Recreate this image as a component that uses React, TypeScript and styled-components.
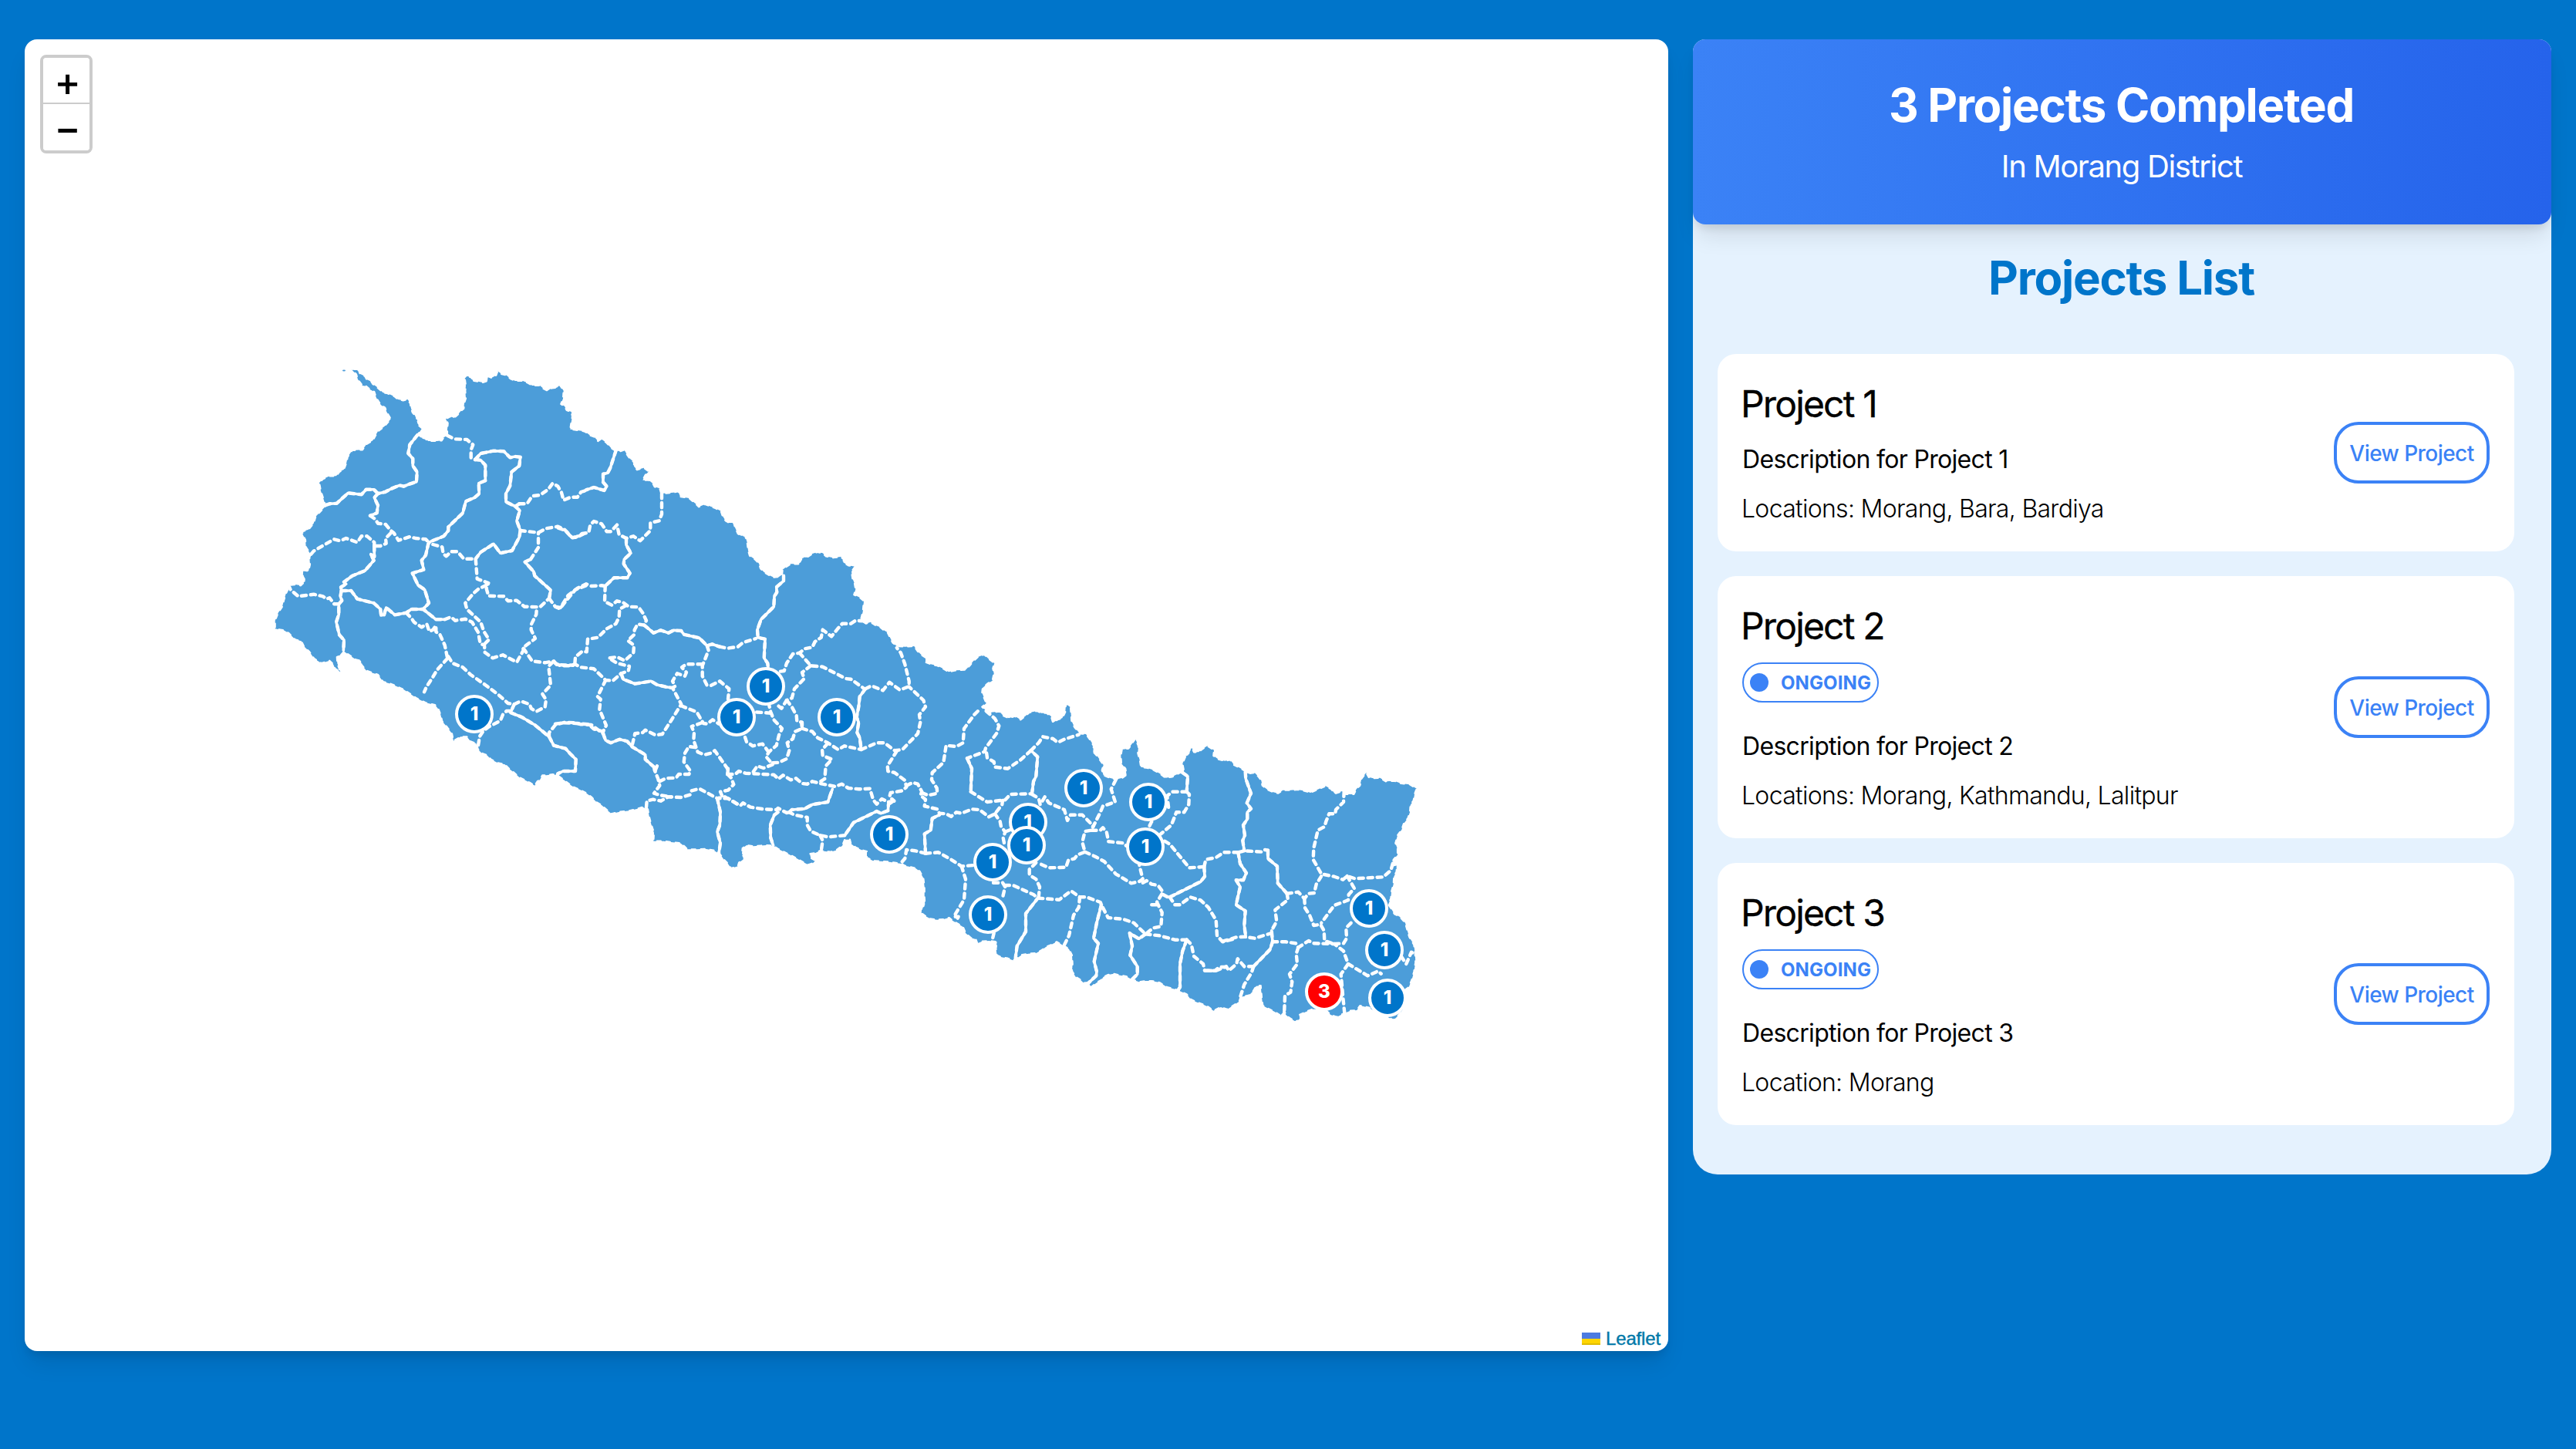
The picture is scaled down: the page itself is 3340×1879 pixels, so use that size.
import React from "react";
import styled, { createGlobalStyle, css } from "styled-components";

const GlobalStyle = createGlobalStyle`
  *, *::before, *::after { box-sizing: border-box; }
  body { margin: 0; background: #0075ca; font-family: Inter, "Liberation Sans", sans-serif; color: #000; }
  h1, h2, h3, p { margin: 0; font-weight: inherit; }
  button { font-family: inherit; cursor: pointer; }
`;

/* ---------- district geometry ---------- */

type Sheet = { x: number; y: number };
const NW: Sheet = { x: 340, y: 460 };
const N: Sheet = { x: 720, y: 560 };
const SW: Sheet = { x: 560, y: 820 };
const MID: Sheet = { x: 940, y: 820 };
const CE: Sheet = { x: 1180, y: 880 };
const E: Sheet = { x: 1480, y: 940 };

/* Survey sheets are drawn at three units per map pixel. */
const plot = (s: Sheet, pts: string) =>
  pts
    .trim()
    .split(/\s+/)
    .map((p) => {
      const [x, y] = p.split(",").map(Number);
      return `${(s.x + x / 3).toFixed(1)},${(s.y + y / 3).toFixed(1)}`;
    })
    .join(" ");

const outline = [
  plot(NW, "342,47 346,52 358,60 375,60 380,74 400,84 406,96 424,104 430,114 444,124 455,134 470,148 486,150 500,156 514,162 528,174 548,178 566,174 576,190 578,206 584,224 594,236 598,246 608,254 602,264 610,276 622,286 604,312 616,322 634,326 646,336 664,336 680,336 698,334 706,322 720,314 720,290 722,266 714,250 732,240 746,246 760,234 772,220 784,210 786,188 792,170 790,140 792,120 788,92 802,78 812,94 824,102 840,104 858,108 876,102 878,84 892,90 910,80 916,64 932,76 950,80 966,94 984,102 1014,102 1034,110 1050,120 1080,120 1094,132 1110,140 1126,130 1146,128 1158,118 1172,140 1170,170 1162,192 1176,200 1184,216 1202,222 1206,240 1202,262 1198,290 1226,294 1252,298"),
  plot(N, "120,2 136,14 152,20 166,36 178,28 196,40 206,50 216,62 232,72 252,76 268,70 280,90 290,104 306,118 306,134 318,148 344,140 364,154 350,168 340,188 364,188 380,202 386,214 406,220 412,240 440,238 460,236 478,232 486,252 520,258 534,270 546,280 558,292 582,282 604,290 624,298 644,308 650,326 662,346 676,354 694,354 700,374 710,396 722,404 738,404 746,430 750,462 756,482 776,496 792,512 798,532 812,546 832,558 850,566 870,564 882,556 884,536 898,526 916,514 946,514 956,506 958,488 980,488 1000,474 1020,468 1040,472 1052,484 1080,490 1110,486 1122,496 1120,508 1140,520 1166,524 1152,544 1156,570 1164,590 1168,612 1162,634 1184,644 1200,658 1196,700 1188,732 1202,742"),
  plot(MID, "548,-34 566,-40 584,-28 604,-20 618,-8 632,0 642,20 652,40 668,54 700,56 736,54 748,72 764,88 780,98 780,116 800,124 826,130 850,142 870,154 900,148 936,146 952,130 966,112 984,96 1008,86 1024,102 1048,120 1042,140 1046,160 1040,188 1020,200 1002,216 1000,234 1008,256 1016,276 1000,290 1024,312"),
  plot(CE, "348,128 362,144 384,154 408,146 430,160 448,146 464,132 494,126 510,134 530,134 548,146 556,172 574,160 592,154 604,130 606,98 624,112 626,140 628,164 640,190 660,214 684,216 700,238 714,262 712,284 730,304 752,336 746,356 752,376 776,386 800,392 826,386 842,374 838,350 822,330 820,300 824,276 850,272 864,252 876,234 888,262 886,290 894,320 898,344 924,348 948,356 972,370 994,386 1020,382 1050,366"),
  plot(E, "166,184 160,150 172,122 182,118 186,100 196,90 204,106 222,106 240,92 256,82 282,98 280,120 300,134 324,140 346,136 360,156 380,166 404,180 414,190 440,186 454,200 466,216 470,236 490,252 512,262 532,266 550,254 580,254 606,252 630,256 658,264 684,252 716,238 738,250 752,268 780,258 796,270 826,270 836,250 850,236 856,210 874,186 884,204 904,208 928,206 950,220 984,218 1010,228 1044,232 1070,248 1062,270 1058,294 1046,312 1044,340 1036,364 1020,384 1012,408 996,430 988,460 996,484 996,506 980,524 976,548 992,544 992,570 982,590 980,620 972,650 970,676 960,698 972,716 984,736 1004,746 1026,770 1034,800 1042,826 1060,856 1064,890 1066,924 1060,960 1052,990 1040,1020 1026,1030 1020,1070 1020,1100 1010,1116 996,1134 980,1148 960,1138 940,1120 900,1110 886,1100 866,1096 850,1092 838,1110 812,1112 784,1124 760,1136 736,1128 720,1112 690,1105 664,1106 640,1116 614,1128 616,1150 596,1152 576,1140 562,1128 556,1112 540,1130 518,1116 494,1104 472,1092 468,1060 466,1036 464,1014 446,1016 434,1036 418,1052 386,1058 380,1076 360,1090 334,1106 308,1098 280,1112 262,1098 236,1086 212,1078 190,1066 176,1048 150,1036 130,1028 100,1020 70,1002 40,996"),
  plot(CE, "916,1176 890,1180 862,1170 840,1158 816,1154 792,1148 770,1152 752,1160 744,1172 724,1184 704,1200 694,1182 676,1184 660,1170 644,1160 630,1138 632,1110 630,1076 618,1052 600,1040 570,1024 548,1036 528,1044 512,1056 490,1068 460,1070 436,1074 418,1086 400,1096 380,1088 356,1084 338,1076 334,1050 338,1024 306,1020 280,1022 262,1030 256,1014 236,1008 216,990 206,966 180,950 166,942 152,930 130,936 104,938 78,934 60,924 44,912 46,890 58,880 56,850 56,810 52,776 38,750 22,738 0,732"),
  plot(MID, "700,908 686,900 660,896 630,892 600,890 574,888 552,876 552,852 530,846 508,836 490,822 486,806 466,806 456,830 432,848 410,854 390,852 372,848 352,858 330,862 334,878 352,888 342,898 324,904 304,894 280,880 254,866 230,854 206,842 188,830 160,828 110,832 84,828 68,840 66,860 76,880 54,896 50,910 24,918"),
  plot(SW, "1150,898 1136,884 1120,862 1096,848 1064,842 1030,844 994,844 982,832 966,820 930,816 900,812 862,812 864,780 854,750 846,720 840,688 820,680 800,686 768,694 730,698 698,706 680,690 660,672 640,660 620,640 598,624 576,612 552,602 536,592 516,576 494,560 470,552 446,556 430,556 420,574 410,580 400,596 380,584 360,574 340,564 320,546 300,530 284,514 256,508 230,494 214,478 194,470 180,456 172,432 150,424 136,406 112,406 84,422 78,394 60,370 40,346 34,320 26,300 12,282 -24,274 -60,256 -110,222 -160,200 -190,192"),
  plot(NW, "450,1244 430,1238 404,1228 386,1206 384,1190 364,1186 344,1172 318,1154 306,1168 290,1172 292,1200 304,1234 284,1222 276,1204 262,1190 230,1200 202,1182 184,1156 162,1134 152,1114 128,1108 104,1084 84,1072 50,1066 50,1034 62,1004 78,980 84,956 92,930 104,904 110,896 130,894 150,898 168,880 158,862 160,838 180,842 186,816 184,790 188,776 170,748 168,720 158,700 156,688 180,680 200,656 208,630 230,606 246,590 240,566 228,530 222,498 236,484 262,472 288,472 300,456 318,446 328,420 332,398 350,372 390,370 406,348 430,334 450,298 476,278 500,250 484,222 478,206 462,196 444,168 436,144 420,136 404,122 390,120 372,96 366,76 352,62"),
].join(" ");

const sharedBorders: [Sheet, string][] = [
  [NW, "604,312 574,350 568,384 586,404 586,432 602,456 600,494 576,502 550,512 534,508 500,522 478,534 450,540"],
  [NW, "450,540 434,524 404,524 386,544 334,538 290,578 262,580 244,586"],
  [NW, "450,540 436,556 450,586 446,616 420,626"],
  [NW, "828,408 850,410 868,430 868,490 842,500 844,540 826,556 792,570 780,616 724,670 724,684 706,706 652,728 646,736 636,780 620,800 628,836 584,850 606,896 632,914 648,966 626,990"],
  [NW, "828,408 850,384 900,374 940,376 964,400 984,396 1004,398 1000,432 970,456 964,510 948,540 948,572 984,590 1000,580"],
  [NW, "436,744 436,786 422,776 434,800 400,840 350,860 318,884 326,892 306,904 308,918"],
  [NW, "984,590 1002,606 990,646 1004,684 1000,710 972,762 926,772 900,736 850,768 830,794"],
  [NW, "1116,948 1122,916 1060,860 1056,844 1022,806 1044,796"],
  [NW, "308,918 346,918 370,950 434,966 460,990 462,1014 474,1012 482,984 516,1012 560,1004 580,990 626,990 676,1030 710,1030"],
  [NW, "308,918 304,940 310,956 298,970 298,1010 288,1040 300,1090 318,1110 316,1150"],
  [N, "236,72 214,140 204,160 186,164 186,196 200,212 190,228 150,216 120,226"],
  [N, "276,414 276,440 294,472 268,496 266,514 290,550 280,568 228,568 194,600"],
  [N, "346,752 382,782 410,772 440,782 460,772 490,774 500,788 560,802 590,832 610,826 640,836"],
  [N, "888,560 888,580 860,604 862,624 852,640 850,680 820,710 800,730 786,770 788,800 816,806 812,880 826,900 828,920"],
  [N, "256,940 264,962 310,980 372,970 396,984 430,992 456,996"],
  [SW, "320,280 306,312 350,330 400,360 456,406"],
  [SW, "456,406 474,440 520,452 536,470 560,494 558,540 510,540 490,550 486,560"],
  [SW, "666,394 676,420 696,430 730,416 760,424 780,446 830,476 830,494 864,524"],
  [SW, "1110,646 1122,700 1120,750 1110,776 1122,820 1116,860"],
  [MID, "250,700 260,690 310,686 340,670 400,660 418,610"],
  [MID, "636,660 658,656 636,668 634,694 606,704 590,696 500,740 466,790"],
  [MID, "206,700 192,710 176,750 178,800 188,830"],
  [MID, "546,220 524,250 520,290 512,330 520,350 514,390 524,410 530,456"],
  [MID, "942,490 960,530 956,620"],
  [MID, "1194,628 1200,580 1210,560 1216,484 1190,460"],
  [MID, "780,860 776,784 800,770 806,724 834,710"],
  [CE, "1060,366 1080,380 1076,440"],
  [CE, "1144,732 1146,770 1130,790 1010,850"],
  [CE, "500,850 450,914 450,984 416,1040 410,1086"],
  [CE, "916,994 890,1012 870,1000 854,990 864,1040 856,1076 884,1120 884,1150 864,1170"],
  [CE, "744,880 726,950 714,1010 732,1030 716,1100 726,1140 724,1156 694,1184"],
  [CE, "1076,1016 1060,1060 1050,1110 1050,1200 1040,1216"],
  [E, "404,184 406,210 426,266 410,304 426,326 412,340 412,366 396,390 402,430 394,450 400,490"],
  [E, "492,488 492,520 528,550 530,616 566,656"],
  [E, "376,496 384,540 408,576 396,604 368,604 384,630 368,700 404,724 400,780 406,826"],
  [E, "436,940 500,874 510,844 506,800"],
];

const dashedBorders: [Sheet, string][] = [
  [NW, "420,626 440,640 450,656 480,660 500,684 512,694 530,722 574,708 596,714 636,718 650,732"],
  [NW, "500,694 480,714 482,734 460,744 436,744"],
  [NW, "190,776 200,764 240,740 280,718 304,724 326,714 370,730 386,706 408,706 436,730 436,744"],
  [NW, "720,314 748,328 796,330 820,350 812,370 812,408"],
  [NW, "664,738 700,748 704,774 716,784 734,766 760,766 784,794 830,794 836,872 880,888 872,910 880,938 940,940 956,958 990,956 1020,980 1080,982 1116,948"],
  [NW, "1044,796 1074,750 1074,692"],
  [NW, "1004,684 1074,692 1104,676 1150,668 1176,680 1206,712 1232,706 1260,692"],
  [NW, "1000,580 1030,580 1050,550 1080,546 1112,524 1130,500 1150,512 1164,536 1172,566 1200,554 1226,554 1240,534 1260,528"],
  [NW, "1116,948 1140,980 1158,988 1180,960 1218,914 1260,898"],
  [NW, "872,896 840,912 820,930 790,966 796,990 850,1040 862,1076 882,1108 860,1130"],
  [NW, "102,896 110,914 140,940 200,932 236,940 250,950 262,946 280,970 298,970"],
  [NW, "710,1030 734,1020 750,1034 790,1028 816,1040 840,1080 848,1124 864,1130 866,1158 896,1180 936,1168 990,1196 1016,1150 1014,1140 1062,1104 1046,1070 1046,1050 1066,1010 1068,982"],
  [NW, "560,1004 580,1024 590,1040 620,1060 640,1048 650,1076 664,1070 676,1054 676,1078 690,1086 710,1130 720,1178"],
  [NW, "720,1182 680,1226 660,1260 640,1290 630,1312"],
  [N, "414,240 414,320 404,346 370,354 370,384 330,424 304,406 276,414 248,400 240,362 216,388 200,388 180,358 150,348 136,362 130,392 104,396 80,410 64,412 40,384 0,370"],
  [N, "194,600 180,598 140,600 120,592 86,608 50,636 20,684 0,680"],
  [N, "194,600 192,660 220,674 240,658 264,664 286,680 324,682 340,704 354,734 346,752"],
  [N, "640,836 670,842 710,836 730,820 780,804"],
  [N, "274,676 250,690 248,720 236,746 200,766 166,800 126,806 122,856 104,854 78,876 76,904"],
  [N, "346,752 320,748 308,770 306,790 282,812 306,830 304,860 270,890 240,876 208,880 240,900 288,912 284,930 256,940"],
  [N, "0,900 20,910 60,910 76,904 100,916 150,922 196,966 224,968 256,940"],
  [N, "590,832 596,850 572,910 572,950 590,986 606,986 640,970 676,1000 672,1040"],
  [N, "572,904 510,904 492,916 510,936 504,950 474,940 456,970 466,990 456,996 490,1060 446,1130 416,1176 390,1180 350,1160 340,1170 310,1174 300,1216"],
  [N, "196,966 164,1030 176,1040 172,1080 198,1142 186,1166"],
  [N, "0,1136 30,1132 80,1134 130,1138 150,1156 186,1166"],
  [N, "1200,736 1168,734 1150,746 1116,746 1100,764 1074,796 1040,770 1034,800 1010,816 1000,838 970,844 950,860 924,864 900,900 890,930 860,934"],
  [N, "950,860 994,910 1040,914 1130,960 1150,962 1200,998"],
  [N, "994,910 960,936 968,960 930,1000 920,1036 900,1044 880,1076 860,1060"],
  [N, "900,1044 920,1070 938,1104 940,1126 960,1130 960,1150"],
  [N, "490,1066 550,1090 576,1134 590,1136 612,1120 636,1136"],
  [SW, "356,62 390,112 440,118 474,112 486,126 550,128"],
  [SW, "64,94 80,120 120,136 150,164 210,206 260,244 296,276 320,280 346,268 380,280 386,296 406,308 440,290 444,262 430,240 462,206 454,132 474,112"],
  [SW, "456,406 456,390 480,360 516,350 560,352 580,358 620,360 666,394"],
  [SW, "306,306 290,306 276,320 266,344 220,368 200,384 186,404 180,440"],
  [SW, "864,524 866,536 880,570 886,596 864,626 890,634 930,640"],
  [SW, "886,580 910,568 950,566 960,552 1000,552 1006,540 980,504 984,470 1000,444 1026,448"],
  [SW, "876,520 868,540"],
  [SW, "1050,352 1010,366 1020,390 1018,420 1034,466 1060,476 1084,470 1100,460 1150,530 1150,552"],
  [SW, "834,680 836,656 860,650 890,656 920,640 970,642 1004,632 1010,616 1040,608 1110,646"],
  [SW, "1150,552 1164,566 1174,592 1152,614 1122,620 1130,640 1110,646 1152,646 1200,676"],
  [MID, "10,552 40,552 54,540 80,548 190,554 208,570 226,556 256,574 276,568 300,588 320,590 340,580 380,590 430,600 454,590 480,606 520,610 564,608 576,650 590,668 610,648 636,660"],
  [MID, "0,640 60,674 70,664 100,680 150,688 200,690 206,684 240,702 250,700"],
  [MID, "12,530 10,552"],
  [MID, "110,542 126,520 150,528 186,514 160,484 170,466 200,440 210,400 222,374 190,340 178,310 172,284"],
  [MID, "178,314 116,310"],
  [MID, "78,408 84,426 108,442 146,434 170,466"],
  [MID, "186,508 210,506 240,492 250,460 242,430 264,414 272,386 300,374 298,350 280,344"],
  [MID, "546,220 570,208 614,226 640,194 680,224 716,210 716,190 700,124 684,80 668,60"],
  [MID, "300,374 340,386 360,410 400,430 440,456 464,442 530,456"],
  [MID, "400,432 378,456 380,480 416,494 392,520 388,570 366,584"],
  [MID, "530,456 590,430 620,430 660,460 690,456 750,394 760,350 756,320 780,290 772,264 716,212"],
  [MID, "668,462 632,520 634,540 660,546 700,576 706,602 690,616 644,624 640,640 658,656"],
  [MID, "466,790 400,796 370,790 334,774 320,750 320,720 270,710 250,700"],
  [MID, "370,790 380,810 374,850"],
  [MID, "706,596 730,584 750,590 766,620 760,634 780,650 776,676 826,688 834,704 860,706 880,716 900,700 920,704 960,688 990,690 1026,718 1050,706 1078,670 1080,654"],
  [MID, "766,624 790,634 826,626 824,606 804,574 806,546 850,506 860,440 900,444 926,430 930,374 970,320 990,300"],
  [MID, "1016,306 1050,336 1066,364 1056,394 1014,450 1010,464 942,490"],
  [MID, "956,620 1020,660 1090,652 1110,630 1194,628"],
  [MID, "1190,460 1150,496 1100,530 1050,524 1046,504 1020,488 1016,460"],
  [MID, "780,860 830,856 880,884 920,910 970,906"],
  [MID, "780,860 740,850 706,846 700,880 684,898"],
  [MID, "920,910 936,960 930,1040 890,1106 908,1106 898,1124"],
  [MID, "1050,706 1070,736 1074,756 1090,776 1082,800 1088,830"],
  [MID, "1110,768 1090,776"],
  [MID, "1044,974 1080,974 1090,990 1078,1040"],
  [MID, "1088,984 1120,984 1200,1020 1218,1034"],
  [MID, "1046,1170 1040,1195"],
  [CE, "470,280 500,250 516,226 556,234 574,248 600,236 656,218"],
  [CE, "474,450 500,466 506,490 524,460 540,484 600,510 612,552 624,530 670,530 700,560 712,576"],
  [CE, "800,394 782,430 798,480 750,496 740,520 712,576 706,590 680,594 670,636 680,674 650,686 640,700 616,706 606,734 540,736 496,716"],
  [CE, "706,590 740,590 750,580 764,596 772,634 830,640 840,650"],
  [CE, "680,674 720,692 756,712 800,760 860,796 890,790 905,780 892,726"],
  [CE, "905,794 920,786 940,800 964,804 984,830 960,870 980,910 976,964 946,970 916,994 870,950 830,936 770,930 744,880 740,870 686,850 660,850 626,826 580,860 500,854"],
  [CE, "940,880 970,880"],
  [CE, "1076,440 1020,440 1000,456 1006,506"],
  [CE, "1076,440 1086,450 1084,490 1066,520 1036,520 1016,570 976,604"],
  [CE, "940,556 928,580"],
  [CE, "990,632 1010,644 1086,736 1144,732"],
  [CE, "1010,850 1030,880 1050,880 1090,850 1130,862 1160,890 1190,940 1194,1000 1216,1024 1256,1014"],
  [CE, "984,840 1010,854"],
  [CE, "1144,732 1150,704 1190,696 1220,676 1276,676"],
  [CE, "660,850 656,890 636,920 618,1000 600,1036"],
  [CE, "916,994 970,1000 1030,1016 1076,1016"],
  [CE, "1076,1016 1094,1034 1104,1080 1140,1110 1146,1136 1186,1136 1204,1122 1230,1122"],
  [CE, "490,716 464,742 464,764 490,780 504,810 500,850"],
  [E, "376,496 400,490 470,494 480,486 492,488"],
  [E, "566,656 610,650 634,676 650,656 672,654 680,620 700,588"],
  [E, "788,260 786,300 756,330 754,346 730,346 718,376 712,396 686,410 670,480 668,524 700,580 750,590 784,602 800,588 830,598 900,594 940,592 970,566 980,530"],
  [E, "800,588 828,636 806,660 804,682 750,702 700,770"],
  [E, "634,676 636,712 654,740 670,780 696,776 710,800 712,840 750,852"],
  [E, "566,656 570,680 520,720 526,764 506,800"],
  [E, "510,844 560,844 600,850 610,866 650,840 670,850 750,852 786,880 804,930 776,970 784,1060 790,1120"],
  [E, "750,852 786,850 798,830 796,790 826,760"],
  [E, "316,842 370,826 400,824 440,830 506,810"],
  [E, "436,940 400,940 374,910 370,930 340,956 330,940 290,956 246,956"],
  [E, "436,940 428,964 400,1010 384,1060"],
  [E, "610,866 602,890 606,930 576,970 586,1000 580,1040 558,1054 556,1110"],
  [E, "804,930 880,976 920,958 932,968"],
  [E, "1010,900 1030,930 1050,884 1062,892"],
];

const markers: { x: number; y: number; count: number; active?: boolean }[] = [
  { x: 993, y: 890, count: 1 },
  { x: 615, y: 926, count: 1 },
  { x: 955, y: 930, count: 1 },
  { x: 1085, y: 930, count: 1 },
  { x: 1405, y: 1022, count: 1 },
  { x: 1489, y: 1040, count: 1 },
  { x: 1332.5, y: 1066, count: 1 },
  { x: 1153, y: 1082, count: 1 },
  { x: 1331, y: 1096, count: 1 },
  { x: 1485, y: 1098, count: 1 },
  { x: 1287, y: 1118, count: 1 },
  { x: 1775, y: 1178, count: 1 },
  { x: 1281, y: 1186, count: 1 },
  { x: 1795, y: 1232, count: 1 },
  { x: 1717, y: 1286, count: 3, active: true },
  { x: 1799, y: 1294, count: 1 },
];

/* ---------- layout ---------- */

const Page = styled.main`
  display: flex;
  align-items: flex-start;
  gap: 32px;
  width: 3340px;
  height: 1879px;
  padding: 51px 32px 0;
  overflow: hidden;
`;

const MapPanel = styled.section`
  position: relative;
  width: 2131px;
  height: 1701px;
  flex: none;
  border-radius: 16px;
  background: #fff;
  box-shadow: 0 20px 30px -6px rgba(0, 0, 0, 0.1), 0 8px 12px -4px rgba(0, 0, 0, 0.1);
`;

const Districts = styled.svg`
  display: block;
  width: 100%;
  height: 100%;
  border-radius: 16px;
`;

const Outline = styled.polygon`
  fill: #4c9dd9;
  stroke: #fff;
  stroke-width: 2.2;
  stroke-linecap: round;
  stroke-linejoin: round;
  stroke-dasharray: 5 7;
`;

const Border = styled.polyline`
  fill: none;
  stroke: #fff;
  stroke-width: 4.4;
  stroke-linecap: round;
  stroke-linejoin: round;
  stroke-dasharray: 6.2 5.8;
`;

const BorderFill = styled(Border)`
  stroke-width: 3.6;
  stroke-dasharray: none;
`;

const Marker = styled.div<{ $x: number; $y: number; $active?: boolean }>`
  position: absolute;
  left: ${(p) => p.$x - 32 - 25}px;
  top: ${(p) => p.$y - 51 - 25}px;
  display: flex;
  align-items: center;
  justify-content: center;
  width: 50px;
  height: 50px;
  border: 4px solid #fff;
  border-radius: 50%;
  background: ${(p) => (p.$active ? "#ff0000" : "#0075ca")};
  color: #fff;
  font-size: 24px;
  font-weight: 800;
  line-height: 1;
`;

const ZoomControl = styled.div`
  position: absolute;
  left: 20px;
  top: 20px;
  display: flex;
  flex-direction: column;
  width: 68px;
  border: 4px solid #ccc;
  border-radius: 8px;
  overflow: hidden;
`;

const ZoomButton = styled.button<{ $divider?: boolean }>`
  display: flex;
  align-items: center;
  justify-content: center;
  height: 60px;
  padding: 2px 0 0 3px;
  border: 0;
  background: #fff;
  color: #000;
  font-size: 52px;
  font-weight: 500;
  line-height: 1;
  ${(p) => p.$divider && css`
    padding-top: 4px;
    border-bottom: 2px solid #ccc;
  `}
`;

const Attribution = styled.div`
  position: absolute;
  right: 10px;
  bottom: 0;
  display: flex;
  align-items: center;
  gap: 7px;
  height: 32px;
  color: #0078a8;
  font-family: "Liberation Sans", Arial, sans-serif;
  font-size: 24px;
  line-height: 32px;
  letter-spacing: -0.15px;
  -webkit-text-stroke: 0.4px #0078a8;
`;

const Flag = styled.svg`
  width: 24px;
  height: 16px;
`;

const SidePanel = styled.aside`
  display: flex;
  flex-direction: column;
  width: 1113px;
  flex: none;
  border-radius: 16px 16px 32px 32px;
  background: #e5f2fe;
`;

const Banner = styled.header`
  display: flex;
  flex-direction: column;
  align-items: center;
  gap: 16px;
  height: 240px;
  padding: 49px 48px 47px;
  border-radius: 16px;
  background: linear-gradient(to right, #3b82f6, #2563eb);
  color: #fff;
  box-shadow: 0 20px 30px -6px rgba(0, 0, 0, 0.1), 0 8px 12px -4px rgba(0, 0, 0, 0.1);
`;

const BannerTitle = styled.h1`
  margin-right: 2px;
  font-size: 60px;
  font-weight: 700;
  line-height: 72px;
  letter-spacing: -1.3px;
`;

const BannerSubtitle = styled.p`
  margin-right: 1px;
  font-size: 40px;
  line-height: 56px;
  letter-spacing: -1.36px;
`;

const ListTitle = styled.h2`
  margin: 33px 0 63px;
  padding-right: 2px;
  color: #0075ca;
  font-size: 60px;
  font-weight: 700;
  line-height: 72px;
  letter-spacing: -1.25px;
  text-align: center;
`;

const List = styled.div`
  display: flex;
  flex-direction: column;
  gap: 32px;
  padding: 0 48px 64px 32px;
`;

const Card = styled.article`
  display: flex;
  align-items: center;
  justify-content: space-between;
  padding: 33px 32px 31px;
  border-radius: 24px;
  background: #fff;
`;

const Details = styled.div`
  display: flex;
  flex-direction: column;
  align-items: flex-start;
  gap: 16px;
`;

const ProjectName = styled.h3`
  margin-left: -2px;
  font-size: 48px;
  line-height: 64px;
  letter-spacing: -1.85px;
  -webkit-text-stroke: 0.3px #000;
`;

const Badge = styled.span`
  display: flex;
  align-items: center;
  gap: 16px;
  width: 177px;
  height: 52px;
  margin: -1px 0 17px;
  padding-left: 8px;
  border: 2px solid #3b82f6;
  border-radius: 26px;
  color: #3b82f6;
  font-size: 24px;
  font-weight: 700;
  letter-spacing: 0.1px;
`;

const Dot = styled.i`
  width: 24px;
  height: 24px;
  border-radius: 50%;
  background: #3b82f6;
`;

const Description = styled.p`
  font-size: 32px;
  line-height: 48px;
  letter-spacing: -0.68px;
`;

const Locations = styled.p`
  margin-left: -1px;
  font-size: 32px;
  font-weight: 300;
  line-height: 48px;
  letter-spacing: -0.69px;
`;

const ViewButton = styled.button`
  width: 202px;
  height: 80px;
  margin-top: -2px;
  padding: 1px 0 0;
  border: 4px solid #3b82f6;
  border-radius: 32px;
  background: #fff;
  color: #3b82f6;
  font-size: 28px;
  font-weight: 500;
  letter-spacing: -0.55px;
`;

const projects = [
  { name: "Project 1", ongoing: false, description: "Description for Project 1", places: ["Morang", "Bara", "Bardiya"] },
  { name: "Project 2", ongoing: true, description: "Description for Project 2", places: ["Morang", "Kathmandu", "Lalitpur"] },
  { name: "Project 3", ongoing: true, description: "Description for Project 3", places: ["Morang"] },
];

function DistrictMap() {
  return (
    <Districts viewBox="32 51 2131 1701">
      <Outline points={outline} />
      <ellipse cx="446" cy="480.5" rx="2" ry="1" fill="#4c9dd9" />
      {sharedBorders.map(([s, p], i) => (
        <BorderFill key={`f${i}`} points={plot(s, p)} />
      ))}
      {[...sharedBorders, ...dashedBorders].map(([s, p], i) => (
        <Border key={`b${i}`} points={plot(s, p)} />
      ))}
    </Districts>
  );
}

export default function App() {
  return (
    <>
      <GlobalStyle />
      <Page>
        <MapPanel>
          <DistrictMap />
          {markers.map((m) => (
            <Marker key={`${m.x}-${m.y}`} $x={m.x} $y={m.y} $active={m.active}>
              {m.count}
            </Marker>
          ))}
          <ZoomControl>
            <ZoomButton $divider aria-label="Zoom in">+</ZoomButton>
            <ZoomButton aria-label="Zoom out">−</ZoomButton>
          </ZoomControl>
          <Attribution>
            <Flag viewBox="0 0 12 8">
              <path fill="#4C7BE1" d="M0 0h12v4H0z" />
              <path fill="#FFD500" d="M0 4h12v3H0z" />
              <path fill="#E0BC00" d="M0 7h12v1H0z" />
            </Flag>
            Leaflet
          </Attribution>
        </MapPanel>
        <SidePanel>
          <Banner>
            <BannerTitle>3 Projects Completed</BannerTitle>
            <BannerSubtitle>In Morang District</BannerSubtitle>
          </Banner>
          <ListTitle>Projects List</ListTitle>
          <List>
            {projects.map((p) => (
              <Card key={p.name}>
                <Details>
                  <ProjectName>{p.name}</ProjectName>
                  {p.ongoing && (
                    <Badge>
                      <Dot />
                      ONGOING
                    </Badge>
                  )}
                  <Description>{p.description}</Description>
                  <Locations>
                    {`${p.places.length > 1 ? "Locations" : "Location"}: ${p.places.join(", ")}`}
                  </Locations>
                </Details>
                <ViewButton>View Project</ViewButton>
              </Card>
            ))}
          </List>
        </SidePanel>
      </Page>
    </>
  );
}
